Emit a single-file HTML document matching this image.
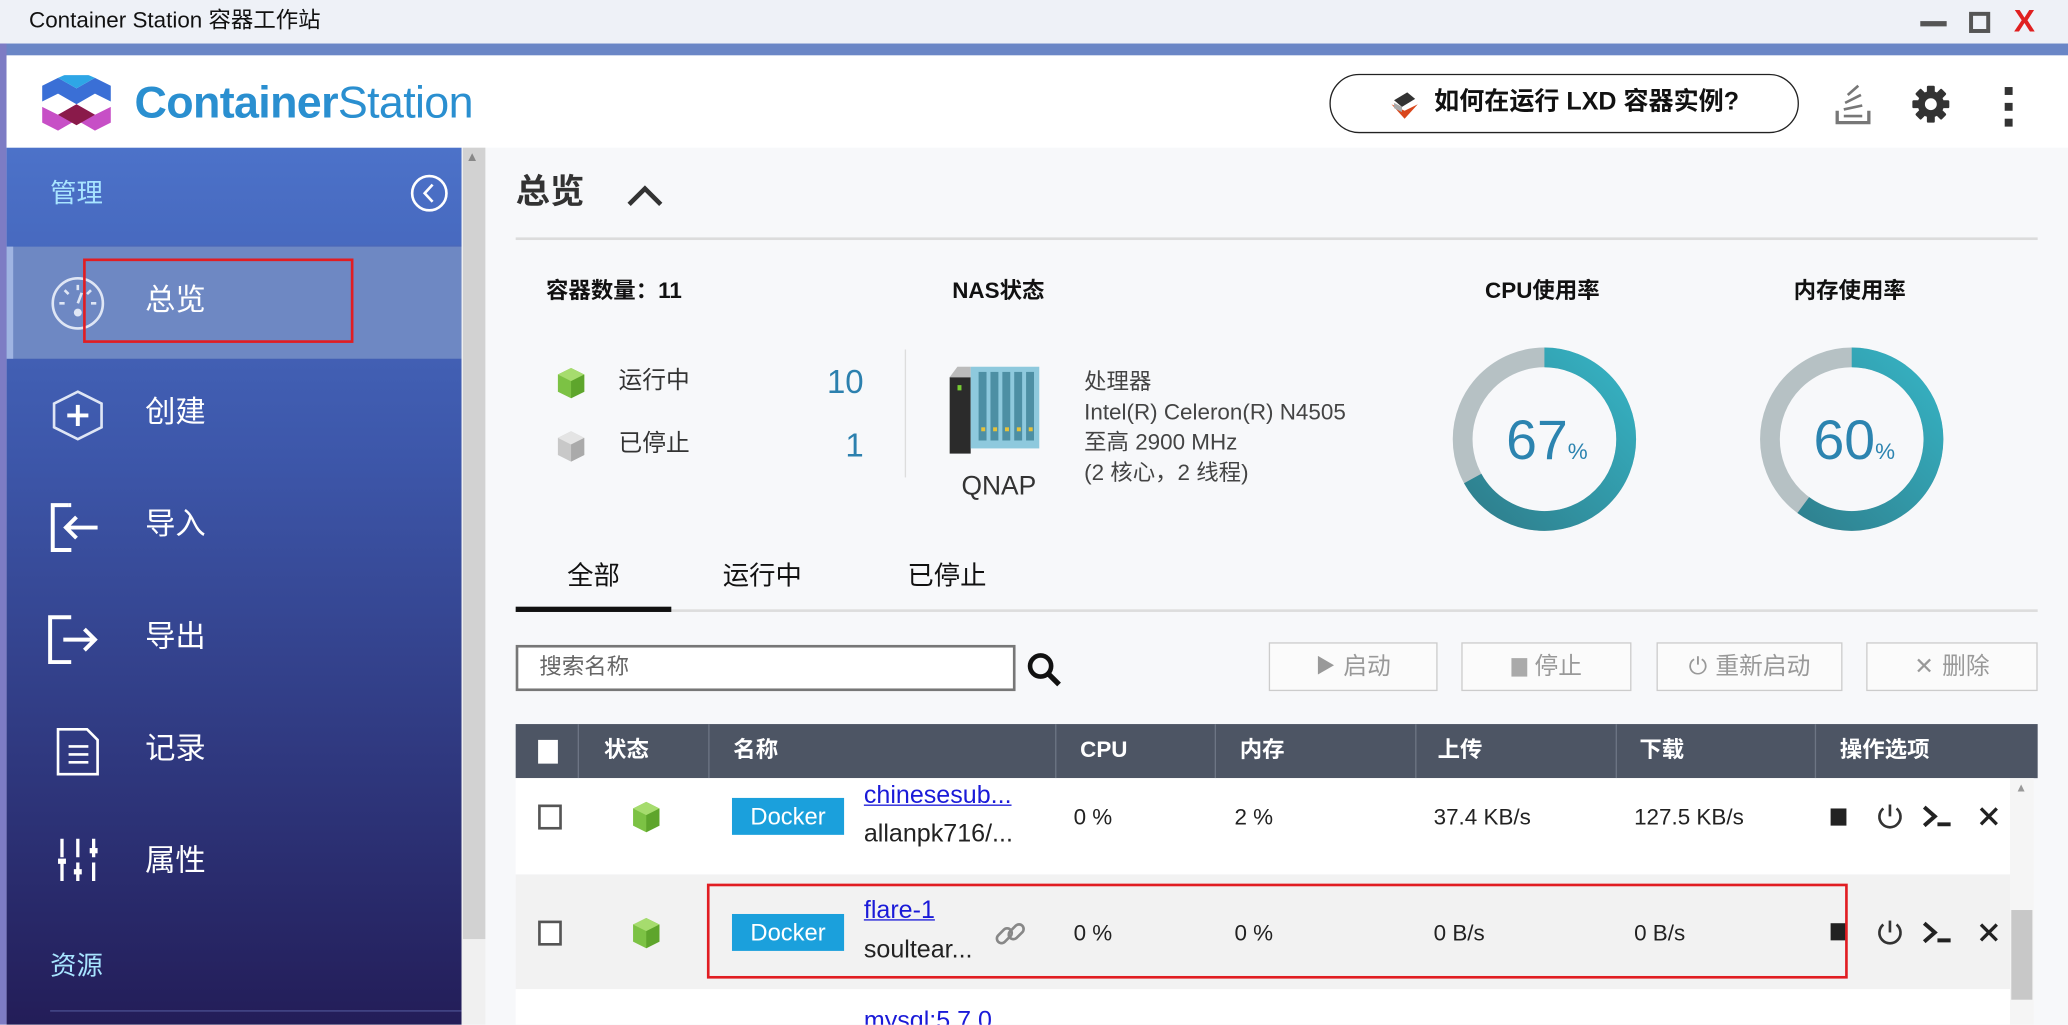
<!DOCTYPE html>
<html><head><meta charset="utf-8">
<style>
*{margin:0;padding:0;box-sizing:border-box}
html,body{width:2068px;height:1024px;overflow:hidden;background:#f7f8fa}
#s{position:absolute;left:0;top:0;width:1568px;height:777px;transform:scale(1.31888);transform-origin:0 0;font-family:"Liberation Sans","Noto Sans CJK SC",sans-serif;overflow:hidden;background:#f7f8fa}
.a{position:absolute;white-space:nowrap;line-height:1.2}
.side{color:#fff;font-size:23px}
.hd{color:#fff;font-size:17px;font-weight:bold;top:559px}
.btn{position:absolute;top:487px;height:37px;border:1.5px solid #ccc;background:#fbfbfb;color:#999;font-size:18px;display:flex;align-items:center;justify-content:center;gap:6px;line-height:1.2}
.cell{font-size:17px;color:#222}
.dk{position:absolute;width:85px;height:28px;background:#1ba0dc;color:#fff;font-size:18px;text-align:center;line-height:28px}
</style></head><body><div id="s">
<!-- title bar -->
<div class="a" style="left:0;top:0;width:1568px;height:33px;background:#eef1f7"></div>
<div class="a" style="left:22px;top:6px;font-size:17px;color:#111">Container Station 容器工作站</div>
<div class="a" style="left:1456px;top:16px;width:20px;height:4px;background:#555"></div>
<div class="a" style="left:1493px;top:9px;width:16px;height:16px;border:3px solid #555"></div>
<div class="a" style="left:1527px;top:3px;font-size:24px;color:#e02020;font-weight:bold">X</div>
<div class="a" style="left:0;top:33px;width:1568px;height:9px;background:#6a86c6"></div>
<div class="a" style="left:0;top:33px;width:5px;height:744px;background:#7d7cc4"></div>
<!-- header -->
<div class="a" style="left:5px;top:42px;width:1563px;height:70px;background:#fff"></div>
<svg class="a" style="left:30px;top:57px" width="56" height="44" viewBox="0 0 56 44">
<polygon points="2,8 14,2 28,10 42,2 54,8 54,20 42,14 28,22 14,14 2,20" fill="#3a6fd6"/>
<polygon points="14,2 28,10 42,2 28,-4" fill="#2ea6e6"/>
<polygon points="2,24 14,30 28,22 42,30 54,24 54,36 42,42 28,34 14,42 2,36" fill="#c74fc6"/>
<polygon points="14,30 28,22 42,30 28,38" fill="#8a1a4a"/>
</svg>
<div class="a" style="left:102px;top:58px;font-size:34px;color:#2a8fd0;letter-spacing:-0.5px"><b style="font-weight:bold">Container</b>Station</div>
<div class="a" style="left:1008px;top:56px;width:356px;height:45px;border:1.5px solid #222;border-radius:23px;font-size:19px;font-weight:bold;color:#111;display:flex;align-items:center;justify-content:center;gap:10px">
<svg width="24" height="24" viewBox="0 0 24 24"><polygon points="2,12 12,17 22,12 12,23" fill="#d9471c"/><polygon points="4,9 14,3 20,8 10,14" fill="#333"/><polygon points="4,11 10,14 10,18 4,15" fill="#aaa"/></svg>如何在运行 LXD 容器实例?</div>
<svg class="a" style="left:1390px;top:62px" width="30" height="34" viewBox="0 0 30 34"><path d="M3 22v9h24v-9" fill="none" stroke="#777" stroke-width="2.5"/><path d="M8 26h14M8 21l14-3M9 16l12-6M11 10l8-7" stroke="#777" stroke-width="2"/></svg>
<svg class="a" style="left:1449px;top:64px" width="30" height="30" viewBox="0 0 30 30"><g fill="#333"><circle cx="15" cy="15" r="10"/><rect x="12" y="1" width="6" height="28" rx="1"/><rect x="12" y="1" width="6" height="28" rx="1" transform="rotate(45 15 15)"/><rect x="12" y="1" width="6" height="28" rx="1" transform="rotate(90 15 15)"/><rect x="12" y="1" width="6" height="28" rx="1" transform="rotate(135 15 15)"/></g><circle cx="15" cy="15" r="4.5" fill="#fff"/></svg>
<div class="a" style="left:1520px;top:66px;width:6px;height:6px;background:#333"></div>
<div class="a" style="left:1520px;top:78px;width:6px;height:6px;background:#333"></div>
<div class="a" style="left:1520px;top:90px;width:6px;height:6px;background:#333"></div>
<!-- sidebar -->
<div class="a" style="left:5px;top:112px;width:345px;height:665px;background:linear-gradient(#4c72c9 0%,#3d57aa 35%,#2b2f72 80%,#231d58 100%)"></div>
<div class="a" style="left:38px;top:135px;font-size:20px;color:#a8e4ff">管理</div>
<svg class="a" style="left:310px;top:131px" width="31" height="31"><circle cx="15.5" cy="15.5" r="13" fill="none" stroke="#fff" stroke-width="2"/><path d="M18 9l-6 6.5 6 6.5" fill="none" stroke="#fff" stroke-width="2"/></svg>
<div class="a" style="left:38px;top:186px;width:312px;height:1px;background:#4c67b8"></div>
<div class="a" style="left:5px;top:187px;width:345px;height:85px;background:#6e88c3"></div>
<div class="a" style="left:5px;top:187px;width:5px;height:85px;background:#9fb4e2"></div>
<svg class="a" style="left:38px;top:209px" width="42" height="42"><circle cx="21" cy="21" r="19" fill="none" stroke="#dfe6f5" stroke-width="2"/><path d="M21 7v4M11 11l3 3M31 11l-3 3M7 21h4M31 21h4M21 21l3-8" stroke="#dfe6f5" stroke-width="2"/><circle cx="21" cy="28" r="3" fill="#dfe6f5"/></svg>
<div class="a side" style="left:110px;top:214px">总览</div>
<div class="a" style="left:63px;top:196px;width:205px;height:64px;border:2px solid #e11d22"></div>
<svg class="a" style="left:38px;top:295px" width="42" height="40"><polygon points="21,2 39,11 39,29 21,38 3,29 3,11" fill="none" stroke="#dfe6f5" stroke-width="2"/><path d="M21 12v16M13 20h16" stroke="#fff" stroke-width="3"/></svg>
<div class="a side" style="left:110px;top:299px">创建</div>
<svg class="a" style="left:38px;top:381px" width="40" height="38"><path d="M14 2H2v34h14M2 2h12" fill="none" stroke="#fff" stroke-width="3"/><path d="M14 2h2M14 36h2M36 19H12M20 11l-8 8 8 8" fill="none" stroke="#fff" stroke-width="3"/></svg>
<div class="a side" style="left:110px;top:384px">导入</div>
<svg class="a" style="left:36px;top:466px" width="40" height="38"><path d="M18 2H2v34h16" fill="none" stroke="#fff" stroke-width="3"/><path d="M12 19h24M28 11l8 8-8 8" fill="none" stroke="#fff" stroke-width="3"/></svg>
<div class="a side" style="left:110px;top:469px">导出</div>
<svg class="a" style="left:42px;top:551px" width="36" height="38"><path d="M2 2h22l8 8v26H2z" fill="none" stroke="#fff" stroke-width="2"/><path d="M10 15h15M10 21h15M10 27h15" stroke="#fff" stroke-width="2"/></svg>
<div class="a side" style="left:110px;top:554px">记录</div>
<svg class="a" style="left:42px;top:634px" width="36" height="40"><path d="M5 2v36M17 2v36M29 2v36" stroke="#fff" stroke-width="2.5" stroke-dasharray="14 4"/><rect x="2" y="17" width="6" height="4" fill="#fff"/><rect x="14" y="25" width="6" height="4" fill="#fff"/><rect x="26" y="9" width="6" height="4" fill="#fff"/></svg>
<div class="a side" style="left:110px;top:639px">属性</div>
<div class="a" style="left:38px;top:721px;font-size:20px;color:#a8e4ff">资源</div>
<div class="a" style="left:38px;top:766px;width:312px;height:1px;background:#4a4f90"></div>
<!-- page scrollbar -->
<div class="a" style="left:350px;top:112px;width:18px;height:665px;background:#f0f0f0"></div>
<div class="a" style="left:351px;top:112px;width:17px;height:600px;background:#d2d2d2"></div>
<div class="a" style="left:353px;top:114px;font-size:10px;color:#888">▲</div>
<!-- content -->
<div class="a" style="left:391px;top:130px;font-size:26px;font-weight:bold;color:#333">总览</div>
<svg class="a" style="left:474px;top:138px" width="30" height="20"><path d="M3 17L15 5l12 12" fill="none" stroke="#333" stroke-width="3.5"/></svg>
<div class="a" style="left:391px;top:180px;width:1154px;height:2px;background:#dcdcdc"></div>
<div class="a" style="left:414px;top:211px;font-size:17px;font-weight:bold;color:#111">容器数量：11</div>
<div class="a" style="left:722px;top:211px;font-size:17px;font-weight:bold;color:#111">NAS状态</div>
<div class="a" style="left:1126px;top:211px;font-size:17px;font-weight:bold;color:#111">CPU使用率</div>
<div class="a" style="left:1360px;top:211px;font-size:17px;font-weight:bold;color:#111">内存使用率</div>
<svg class="a" style="left:422px;top:278px" width="22" height="25"><polygon points="11,1 21,6 21,19 11,24 1,19 1,6" fill="#7cc244"/><polygon points="11,1 21,6 11,11 1,6" fill="#a6dc6e"/><polygon points="11,11 21,6 21,19 11,24" fill="#5ea52c"/></svg>
<div class="a" style="left:469px;top:278px;font-size:18px;color:#333">运行中</div>
<div class="a" style="left:627px;top:275px;font-size:25px;color:#2c80ae">10</div>
<svg class="a" style="left:422px;top:326px" width="22" height="25"><polygon points="11,1 21,6 21,19 11,24 1,19 1,6" fill="#c8c8c8"/><polygon points="11,1 21,6 11,11 1,6" fill="#e4e4e4"/><polygon points="11,11 21,6 21,19 11,24" fill="#aaa"/></svg>
<div class="a" style="left:469px;top:326px;font-size:18px;color:#333">已停止</div>
<div class="a" style="left:641px;top:323px;font-size:25px;color:#2c80ae">1</div>
<div class="a" style="left:686px;top:265px;width:1px;height:97px;background:#ddd"></div>
<svg class="a" style="left:720px;top:278px" width="70" height="66"><rect x="0" y="8" width="16" height="58" fill="#2b2b2b"/><polygon points="0,8 6,0 16,0 16,8" fill="#bbb"/><rect x="16" y="0" width="52" height="62" fill="#8ec9dd"/><g fill="#4d8fa4"><rect x="22" y="4" width="6" height="52"/><rect x="31" y="4" width="6" height="52"/><rect x="40" y="4" width="6" height="52"/><rect x="49" y="4" width="6" height="52"/><rect x="58" y="4" width="6" height="52"/></g><g fill="#e6c23a"><rect x="24" y="46" width="3" height="3"/><rect x="33" y="46" width="3" height="3"/><rect x="42" y="46" width="3" height="3"/><rect x="51" y="46" width="3" height="3"/><rect x="60" y="46" width="3" height="3"/></g><rect x="6" y="14" width="3" height="4" fill="#7c3"/></svg>
<div class="a" style="left:729px;top:357px;font-size:20px;color:#333">QNAP</div>
<div class="a" style="left:822px;top:278px;font-size:17px;color:#444;line-height:23px;white-space:pre">处理器
Intel(R) Celeron(R) N4505
至高 2900 MHz
(2 核心，2 线程)</div>
<svg class="a" style="left:1101px;top:263px" width="140" height="140" viewBox="0 0 140 140">
<defs><linearGradient id="g1" x1="0" y1="0" x2="1" y2="1"><stop offset="0" stop-color="#2e7c8a"/><stop offset="1" stop-color="#36b3c4"/></linearGradient></defs>
<circle cx="70" cy="70" r="62" fill="none" stroke="#b6c1c4" stroke-width="15"/>
<circle cx="70" cy="70" r="62" fill="none" stroke="url(#g1)" stroke-width="15" stroke-dasharray="261 1000" transform="rotate(-90 70 70)"/>
</svg>
<div class="a" style="left:1142px;top:309px;font-size:42px;color:#2c84b0">67<span style="font-size:17px">%</span></div>
<svg class="a" style="left:1334px;top:263px" width="140" height="140" viewBox="0 0 140 140">
<circle cx="70" cy="70" r="62" fill="none" stroke="#b6c1c4" stroke-width="15"/>
<circle cx="70" cy="70" r="62" fill="none" stroke="url(#g1)" stroke-width="15" stroke-dasharray="234 1000" transform="rotate(-90 70 70)"/>
</svg>
<div class="a" style="left:1375px;top:309px;font-size:42px;color:#2c84b0">60<span style="font-size:17px">%</span></div>
<!-- tabs -->
<div class="a" style="left:430px;top:425px;font-size:20px;color:#111">全部</div>
<div class="a" style="left:548px;top:425px;font-size:20px;color:#111">运行中</div>
<div class="a" style="left:688px;top:425px;font-size:20px;color:#111">已停止</div>
<div class="a" style="left:391px;top:462px;width:1154px;height:2px;background:#ddd"></div>
<div class="a" style="left:391px;top:460px;width:118px;height:4px;background:#111"></div>
<!-- search -->
<div class="a" style="left:391px;top:489px;width:379px;height:35px;border:2px solid #777;background:#fff;font-size:17px;color:#666;padding:5px 0 0 16px">搜索名称</div>
<svg class="a" style="left:778px;top:494px" width="28" height="28"><circle cx="11" cy="11" r="8" fill="none" stroke="#111" stroke-width="3.5"/><path d="M17 17l8 8" stroke="#111" stroke-width="4"/></svg>
<div class="btn" style="left:962px;width:128px"><span style="font-size:15px">▶</span>启动</div>
<div class="btn" style="left:1108px;width:129px"><span style="display:inline-block;width:12px;height:14px;background:#aaa"></span>停止</div>
<div class="btn" style="left:1256px;width:141px"><span>⏻</span>重新启动</div>
<div class="btn" style="left:1415px;width:130px"><span>✕</span>删除</div>
<!-- table -->
<div class="a" style="left:391px;top:549px;width:1154px;height:41px;background:#4d5564"></div>
<div class="a" style="left:408px;top:561px;width:15px;height:18px;background:#fff"></div>
<div class="a" style="left:438px;top:549px;width:1px;height:41px;background:#6d7584"></div>
<div class="a" style="left:537px;top:549px;width:1px;height:41px;background:#6d7584"></div>
<div class="a" style="left:800px;top:549px;width:1px;height:41px;background:#6d7584"></div>
<div class="a" style="left:921px;top:549px;width:1px;height:41px;background:#6d7584"></div>
<div class="a" style="left:1073px;top:549px;width:1px;height:41px;background:#6d7584"></div>
<div class="a" style="left:1225px;top:549px;width:1px;height:41px;background:#6d7584"></div>
<div class="a" style="left:1376px;top:549px;width:1px;height:41px;background:#6d7584"></div>
<div class="a hd" style="left:458px">状态</div>
<div class="a hd" style="left:556px">名称</div>
<div class="a hd" style="left:819px">CPU</div>
<div class="a hd" style="left:940px">内存</div>
<div class="a hd" style="left:1090px">上传</div>
<div class="a hd" style="left:1243px">下载</div>
<div class="a hd" style="left:1395px">操作选项</div>
<div class="a" style="left:391px;top:590px;width:1133px;height:73px;background:#fff"></div>
<div class="a" style="left:391px;top:663px;width:1133px;height:87px;background:#f2f2f2"></div>
<div class="a" style="left:391px;top:750px;width:1133px;height:27px;background:#fff"></div>
<div class="a" style="left:1524px;top:590px;width:18px;height:187px;background:#f5f5f5"></div>
<div class="a" style="left:1525px;top:690px;width:16px;height:68px;background:#c8c8c8"></div>
<div class="a" style="left:1528px;top:592px;font-size:9px;color:#999">▲</div>
<!-- row1 -->
<div class="a" style="left:408px;top:610px;width:18px;height:19px;border:2px solid #555;background:#fff"></div>
<svg class="a" style="left:479px;top:607px" width="22" height="25"><polygon points="11,1 21,6 21,19 11,24 1,19 1,6" fill="#7cc244"/><polygon points="11,1 21,6 11,11 1,6" fill="#a6dc6e"/><polygon points="11,11 21,6 21,19 11,24" fill="#5ea52c"/></svg>
<div class="dk" style="left:555px;top:605px">Docker</div>
<div class="a" style="left:655px;top:593px;font-size:19px;color:#1a1ad8;text-decoration:underline">chinesesub...</div>
<div class="a" style="left:655px;top:622px;font-size:19px;color:#222">allanpk716/...</div>
<div class="a cell" style="left:814px;top:610px">0 %</div>
<div class="a cell" style="left:936px;top:610px">2 %</div>
<div class="a cell" style="left:1087px;top:610px">37.4 KB/s</div>
<div class="a cell" style="left:1239px;top:610px">127.5 KB/s</div>
<!-- row2 -->
<div class="a" style="left:408px;top:698px;width:18px;height:19px;border:2px solid #555;background:#fff"></div>
<svg class="a" style="left:479px;top:695px" width="22" height="25"><polygon points="11,1 21,6 21,19 11,24 1,19 1,6" fill="#7cc244"/><polygon points="11,1 21,6 11,11 1,6" fill="#a6dc6e"/><polygon points="11,11 21,6 21,19 11,24" fill="#5ea52c"/></svg>
<div class="dk" style="left:555px;top:693px">Docker</div>
<div class="a" style="left:655px;top:680px;font-size:19px;color:#1a1ad8;text-decoration:underline">flare-1</div>
<div class="a" style="left:655px;top:710px;font-size:19px;color:#222">soultear...</div>
<svg class="a" style="left:752px;top:694px" width="28" height="28"><g fill="none" stroke="#888" stroke-width="2"><rect x="3" y="12" width="13" height="7" rx="3.5" transform="rotate(-45 9.5 15.5)"/><rect x="12" y="9" width="13" height="7" rx="3.5" transform="rotate(-45 18.5 12.5)"/></g></svg>
<div class="a cell" style="left:814px;top:698px">0 %</div>
<div class="a cell" style="left:936px;top:698px">0 %</div>
<div class="a cell" style="left:1087px;top:698px">0 B/s</div>
<div class="a cell" style="left:1239px;top:698px">0 B/s</div>
<!-- action icons -->
<div class="a" style="left:1388px;top:613px;width:12px;height:13px;background:#222"></div>
<div class="a" style="left:1388px;top:700px;width:12px;height:13px;background:#222"></div>
<svg class="a" style="left:1422px;top:608px" width="22" height="22"><path d="M6 5a8 8 0 1 0 10 0" fill="none" stroke="#333" stroke-width="2"/><path d="M11 2v9" stroke="#333" stroke-width="2"/></svg>
<svg class="a" style="left:1422px;top:696px" width="22" height="22"><path d="M6 5a8 8 0 1 0 10 0" fill="none" stroke="#333" stroke-width="2"/><path d="M11 2v9" stroke="#333" stroke-width="2"/></svg>
<svg class="a" style="left:1457px;top:609px" width="24" height="20"><path d="M2 3l8 7-8 7" fill="none" stroke="#222" stroke-width="3"/><path d="M12 16h10" stroke="#222" stroke-width="3"/></svg>
<svg class="a" style="left:1457px;top:697px" width="24" height="20"><path d="M2 3l8 7-8 7" fill="none" stroke="#222" stroke-width="3"/><path d="M12 16h10" stroke="#222" stroke-width="3"/></svg>
<svg class="a" style="left:1500px;top:611px" width="16" height="16"><path d="M2 2l12 12M14 2L2 14" stroke="#222" stroke-width="2.5"/></svg>
<svg class="a" style="left:1500px;top:699px" width="16" height="16"><path d="M2 2l12 12M14 2L2 14" stroke="#222" stroke-width="2.5"/></svg>
<div class="a" style="left:536px;top:670px;width:865px;height:72px;border:2.5px solid #e11d22"></div>
<div class="a" style="left:655px;top:764px;font-size:19px;color:#1a1ad8;text-decoration:underline">mysql:5.7.0</div>
</div></body></html>
